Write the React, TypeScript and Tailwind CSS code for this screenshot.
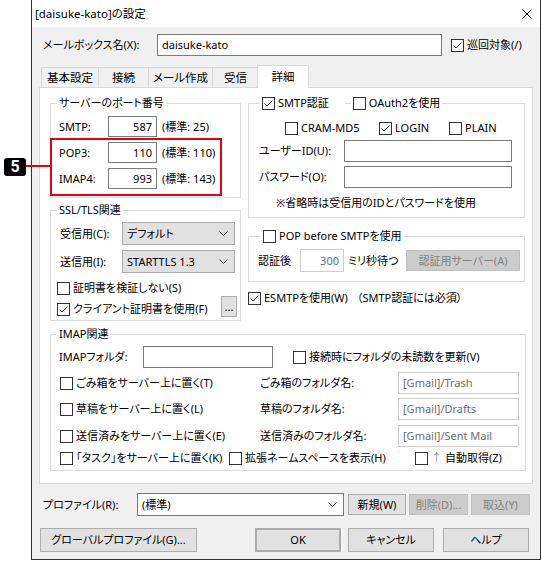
import React from "react";

type Kids = { children?: React.ReactNode; className?: string };

function Check({ checked = false }: { checked?: boolean }) {
  return (
    <span className="flex h-[13px] w-[13px] shrink-0 items-center justify-center border border-[#333333] bg-white">
      {checked && (
        <svg width="11" height="11" viewBox="0 0 11 11">
          <path d="M1.5 5.5 L4 8 L9.5 2.5" fill="none" stroke="#333333" strokeWidth="1" />
        </svg>
      )}
    </span>
  );
}

function CheckLabel({ checked = false, children, className = "" }: Kids & { checked?: boolean }) {
  return (
    <label className={`flex h-[16px] items-center gap-[3px] whitespace-nowrap ${className}`}>
      <Check checked={checked} />
      <span>{children}</span>
    </label>
  );
}

function TextBox({
  value = "",
  className = "",
  disabled = false,
  right = false,
}: {
  value?: string;
  className?: string;
  disabled?: boolean;
  right?: boolean;
}) {
  return (
    <div
      className={`flex shrink-0 items-center whitespace-nowrap border bg-white px-[4px] ${
        disabled ? "border-[#cccccc] text-[#6d6d6d]" : "border-[#7a7a7a]"
      } ${right ? "justify-end" : ""} ${className}`}
    >
      {value}
    </div>
  );
}

function Btn({ children, className = "", disabled = false }: Kids & { disabled?: boolean }) {
  return (
    <button
      type="button"
      className={`flex shrink-0 items-center justify-center whitespace-nowrap border ${
        disabled ? "border-[#bfbfbf] bg-[#cccccc] text-[#838383]" : "border-[#adadad] bg-[#e1e1e1]"
      } ${className}`}
    >
      {children}
    </button>
  );
}

function Chevron() {
  return (
    <svg width="9" height="5" viewBox="0 0 9 5" className="shrink-0">
      <path d="M0.5 0.5 L4.5 4.5 L8.5 0.5" fill="none" stroke="#333333" strokeWidth="1" />
    </svg>
  );
}

function Select({ value, className = "", white = false }: { value: string; className?: string; white?: boolean }) {
  return (
    <div
      className={`flex shrink-0 items-center justify-between border pl-[4px] pr-[6px] ${
        white ? "border-[#7a7a7a] bg-white" : "border-[#adadad] bg-[#e1e1e1]"
      } ${className}`}
    >
      <span className="whitespace-nowrap">{value}</span>
      <Chevron />
    </div>
  );
}

function Group({
  legend,
  legendClass = "ml-[6px]",
  className = "",
  children,
}: Kids & { legend: React.ReactNode; legendClass?: string }) {
  return (
    <fieldset className={`border border-[#dcdcdc] ${className}`}>
      <legend className={`px-[2px] leading-[16px] ${legendClass}`}>{legend}</legend>
      {children}
    </fieldset>
  );
}

function Tab({ children, className = "", active = false }: Kids & { active?: boolean }) {
  return (
    <div
      className={`flex items-center justify-center border-x border-t border-[#d9d9d9] text-[11.5px] ${
        active ? "relative z-10 h-[23px] bg-white" : "h-[21px] bg-[#f0f0f0]"
      } ${className}`}
    >
      {children}
    </div>
  );
}

export default function App() {
  return (
    <div className="relative h-[561px] w-[542px] overflow-hidden bg-white text-[11px] leading-[16px] text-black [font-family:'Noto_Sans','Noto_Sans_CJK_JP',sans-serif] [font-feature-settings:'palt']">
      <div className="ml-[31px] flex h-[560px] w-[510px] flex-col border-x border-b border-[#333333] bg-[#f0f0f0]">
        {/* title bar */}
        <div className="flex h-[27px] shrink-0 items-center justify-between bg-white pl-[3px] pr-[8px] text-[11.5px]">
          <span>[daisuke-kato]の設定</span>
          <svg width="10" height="10" viewBox="0 0 10 10">
            <path d="M0.5 0.5 L9.5 9.5 M9.5 0.5 L0.5 9.5" stroke="#000" strokeWidth="1" />
          </svg>
        </div>

        <div className="mt-[7px] flex h-[22px] items-center pl-[11px]">
          <span className="w-[114px]">メールボックス名(X):</span>
          <TextBox value="daisuke-kato" className="h-[22px] w-[285px]" />
          <CheckLabel checked className="ml-[9px]">
            巡回対象(/)
          </CheckLabel>
        </div>

        <div className="mt-[9px] flex h-[23px] items-end pl-[9px]">
          <Tab className="w-[58px]">基本設定</Tab>
          <Tab className="-ml-[1px] w-[51px]">接続</Tab>
          <Tab className="-ml-[1px] w-[65px]">メール作成</Tab>
          <Tab className="-ml-[1px] w-[47px]">受信</Tab>
          <Tab active className="-ml-[2px] w-[52px]">
            詳細
          </Tab>
        </div>

        {/* tab panel */}
        <div className="-mt-[1px] ml-[7px] h-[397px] w-[494px] shrink-0 border border-[#d9d9d9] bg-white">
          <div className="flex pl-[10px] pt-[7px]">
            <div className="flex w-[191px] flex-col">
              <Group legend="サーバーのポート番号" className="pb-[8px]">
                <div className="flex flex-col gap-[5px] pl-[8px] pt-[5px]">
                  {[
                    ["SMTP:", "587", "(標準: 25)"],
                    ["POP3:", "110", "(標準: 110)"],
                    ["IMAP4:", "993", "(標準: 143)"],
                  ].map(([label, port, std]) => (
                    <div key={label} className="flex h-[21px] items-center">
                      <span className="w-[49px]">{label}</span>
                      <TextBox value={port} right className="h-[21px] w-[49px]" />
                      <span className="ml-[5px] whitespace-nowrap">{std}</span>
                    </div>
                  ))}
                </div>
              </Group>

              <Group legend="SSL/TLS関連" className="mt-[4px] pb-[3px]">
                <div className="flex flex-col pl-[9px] pt-[4px]">
                  <div className="flex h-[23px] items-center">
                    <span className="w-[62px]">受信用(C):</span>
                    <Select value="デフォルト" className="h-[23px] w-[113px]" />
                  </div>
                  <div className="mt-[5px] flex h-[23px] items-center">
                    <span className="w-[62px]">送信用(I):</span>
                    <Select value="STARTTLS 1.3" className="h-[23px] w-[113px]" />
                  </div>
                </div>
                <div className="flex flex-col pl-[6px] pr-[3px]">
                  <CheckLabel className="mt-[7px]">証明書を検証しない(S)</CheckLabel>
                  <div className="flex justify-between">
                    <CheckLabel checked className="mt-[5px]">
                      クライアント証明書を使用(F)
                    </CheckLabel>
                    <Btn className="h-[21px] w-[16px] leading-[10px]">...</Btn>
                  </div>
                </div>
              </Group>
            </div>

            <div className="ml-[7px] flex w-[277px] flex-col">
              <Group
                legendClass="ml-[11px]"
                className="pb-[6px]"
                legend={
                  <span className="flex items-center">
                    <CheckLabel checked>SMTP認証</CheckLabel>
                    <span className="ml-[16px] h-[1px] w-[6px] bg-[#dcdcdc]" />
                    <CheckLabel className="ml-[2px]">OAuth2を使用</CheckLabel>
                  </span>
                }
              >
                <div className="flex pl-[36px] pt-[9px]">
                  <CheckLabel className="w-[94px]">CRAM-MD5</CheckLabel>
                  <CheckLabel checked className="w-[70px]">
                    LOGIN
                  </CheckLabel>
                  <CheckLabel>PLAIN</CheckLabel>
                </div>
                <div className="mt-[4px] flex h-[22px] items-center pl-[10px]">
                  <span className="w-[85px]">ユーザーID(U):</span>
                  <TextBox className="h-[22px] w-[168px]" />
                </div>
                <div className="mt-[4px] flex h-[22px] items-center pl-[10px]">
                  <span className="w-[85px]">パスワード(O):</span>
                  <TextBox className="h-[22px] w-[168px]" />
                </div>
                <div className="mt-[7px] pl-[27px] whitespace-nowrap">※省略時は受信用のIDとパスワードを使用</div>
              </Group>

              <Group
                legendClass="ml-[12px]"
                className="mt-[10px] pb-[9px]"
                legend={<CheckLabel>POP before SMTPを使用</CheckLabel>}
              >
                <div className="mt-[5px] flex h-[23px] items-center pl-[9px]">
                  <span className="w-[42px]">認証後</span>
                  <TextBox value="300" right disabled className="h-[23px] w-[44px]" />
                  <span className="ml-[4px] w-[58px] whitespace-nowrap">ミリ秒待つ</span>
                  <Btn disabled className="h-[21px] w-[114px]">
                    認証用サーバー(A)
                  </Btn>
                </div>
              </Group>

              <CheckLabel checked className="mt-[8px]">
                ESMTPを使用(W)<span className="ml-[9px]">（SMTP認証には必須）</span>
              </CheckLabel>
            </div>
          </div>

          <Group legend="IMAP関連" className="ml-[10px] mt-[5px] w-[476px] pb-[4px]">
            <div className="mt-[4px] flex h-[22px] items-center pl-[8px]">
              <span className="w-[84px] whitespace-nowrap">IMAPフォルダ:</span>
              <TextBox className="h-[22px] w-[130px]" />
              <CheckLabel className="ml-[20px]">接続時にフォルダの未読数を更新(V)</CheckLabel>
            </div>
            {[
              ["ごみ箱をサーバー上に置く(T)", "ごみ箱のフォルダ名:", "[Gmail]/Trash", "mt-[4px]"],
              ["草稿をサーバー上に置く(L)", "草稿のフォルダ名:", "[Gmail]/Drafts", "mt-[4px]"],
              ["送信済みをサーバー上に置く(E)", "送信済みのフォルダ名:", "[Gmail]/Sent Mail", "mt-[5px]"],
            ].map(([check, label, folder, gap]) => (
              <div key={label} className={`flex h-[22px] items-center pl-[9px] ${gap}`}>
                <CheckLabel className="w-[200px]">{check}</CheckLabel>
                <span className="w-[138px] whitespace-nowrap">{label}</span>
                <TextBox value={folder} disabled className="h-[22px] w-[121px]" />
              </div>
            ))}
            <div className="mt-[3px] flex pl-[9px]">
              <CheckLabel className="w-[169px]">「タスク」をサーバー上に置く(K)</CheckLabel>
              <CheckLabel className="w-[186px]">拡張ネームスペースを表示(H)</CheckLabel>
              <CheckLabel>
                <span className="mr-[3px] text-[#7a8ea8]">↑</span>自動取得(Z)
              </CheckLabel>
            </div>
          </Group>
        </div>

        <div className="mt-[9px] flex h-[23px] items-center pl-[11px]">
          <span className="w-[94px]">プロファイル(R):</span>
          <Select white value="(標準)" className="h-[23px] w-[207px]" />
          <Btn className="ml-[4px] h-[21px] w-[58px]">新規(W)</Btn>
          <Btn disabled className="ml-[3px] h-[21px] w-[59px]">
            削除(D)...
          </Btn>
          <Btn disabled className="ml-[3px] h-[21px] w-[59px]">
            取込(Y)
          </Btn>
        </div>

        <div className="mt-[12px] flex h-[24px] items-center pl-[8px]">
          <Btn className="h-[24px] w-[157px]">グローバルプロファイル(G)...</Btn>
          <Btn className="ml-[58px] h-[24px] w-[86px] border-2 border-[#0078d7]">OK</Btn>
          <Btn className="ml-[7px] h-[24px] w-[86px]">キャンセル</Btn>
          <Btn className="ml-[9px] h-[24px] w-[86px]">ヘルプ</Btn>
        </div>
      </div>

      {/* callout annotation */}
      <div className="absolute left-[50px] top-[138px] h-[58px] w-[172px] border-2 border-[#e60012]" />
      <div className="absolute left-[26px] top-[165px] h-[2px] w-[25px] bg-[#e60012]" />
      <div className="absolute left-[4px] top-[158px] flex h-[18px] w-[22px] items-center justify-center rounded-[3px] bg-black text-[16px] font-bold leading-none text-white [font-family:Roboto,sans-serif]">
        5
      </div>
    </div>
  );
}
